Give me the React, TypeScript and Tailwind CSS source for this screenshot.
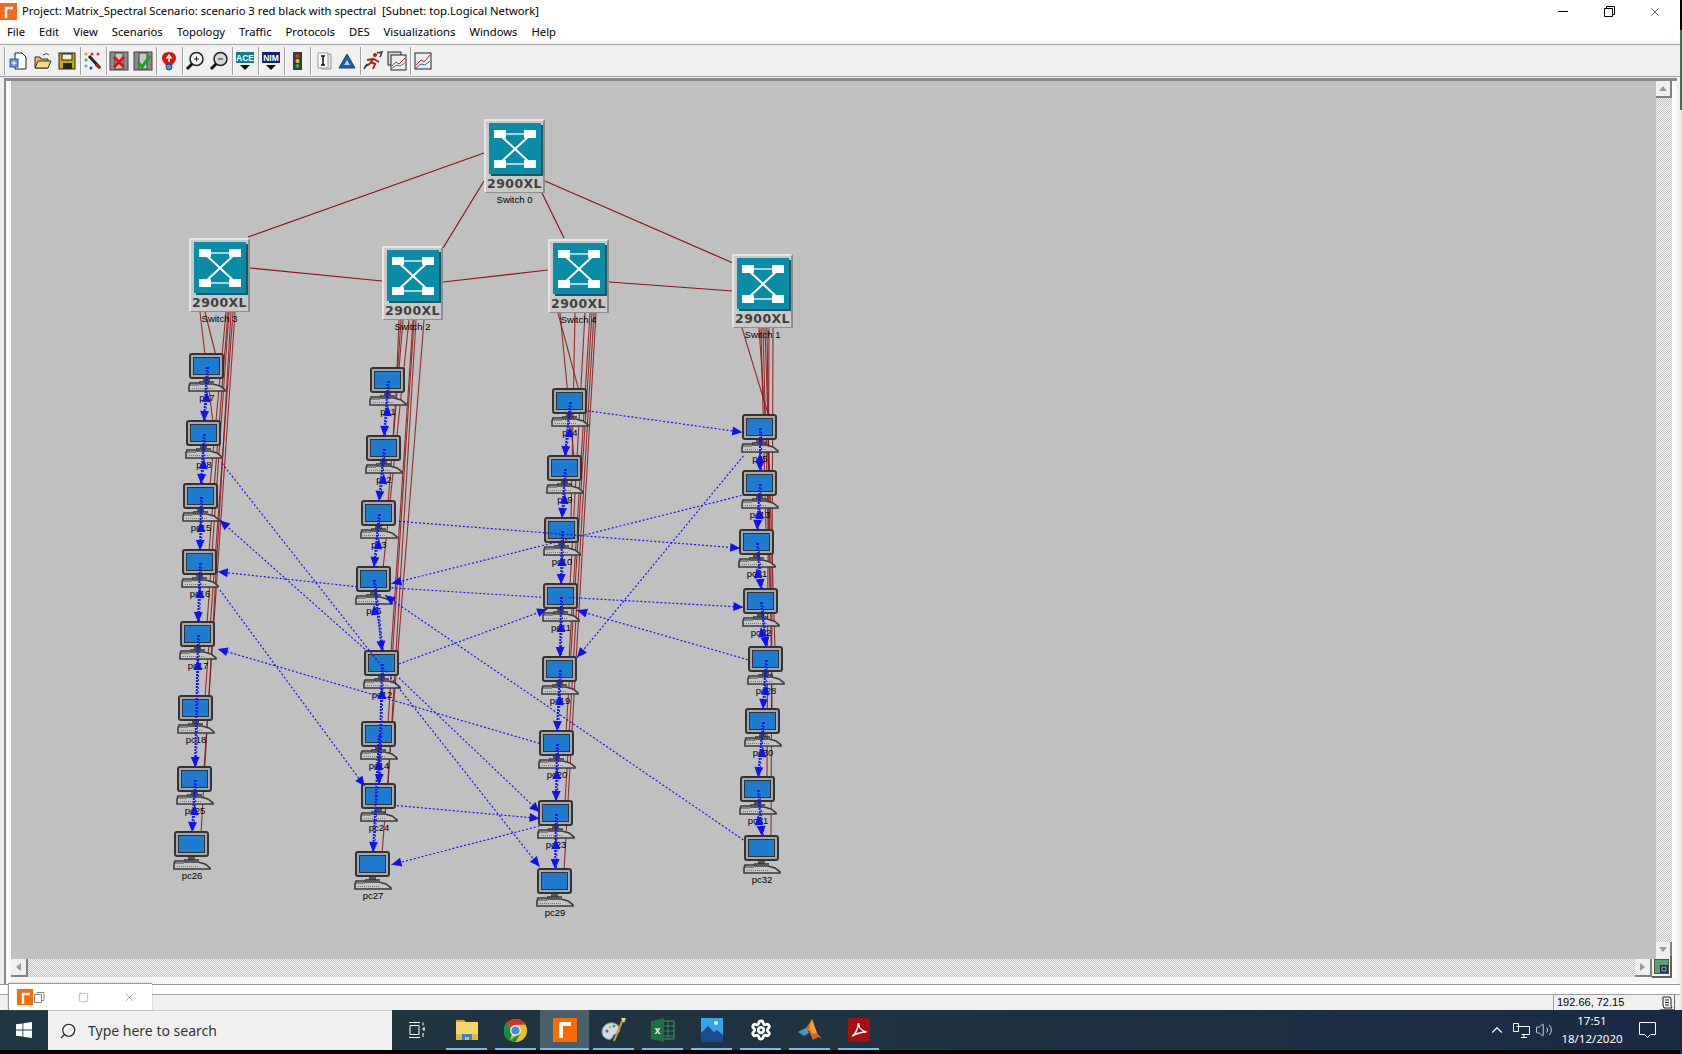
import type { ReactNode } from "react"
import { Settings, Search, ChevronUp, Volume2, X, Square } from "lucide-react"

// canvas origin in page coordinates
const OX = 11
const OY = 81
// cross links were traced off the shrunk screenshot
const K = 1682 / 1568

type Pc = { id: string; x: number; y: number; from: number }

const columns: { sw: number; pcs: Pc[] }[] = [
  {
    sw: 312,
    pcs: [
      { id: "pc7", x: 207, y: 367, from: 205 },
      { id: "pc8", x: 204, y: 434, from: 200 },
      { id: "pc15", x: 201, y: 497, from: 226 },
      { id: "pc16", x: 200, y: 563, from: 228 },
      { id: "pc17", x: 198, y: 635, from: 229 },
      { id: "pc18", x: 196, y: 709, from: 233 },
      { id: "pc25", x: 195, y: 780, from: 235 },
      { id: "pc26", x: 192, y: 845, from: 231 },
    ],
  },
  {
    sw: 320,
    pcs: [
      { id: "pc1", x: 388, y: 381, from: 399 },
      { id: "pc2", x: 384, y: 449, from: 401 },
      { id: "pc3", x: 379, y: 514, from: 403 },
      { id: "pc6", x: 374, y: 580, from: 409 },
      { id: "pc12", x: 382, y: 664, from: 413 },
      { id: "pc14", x: 379, y: 735, from: 414 },
      { id: "pc24", x: 379, y: 797, from: 416 },
      { id: "pc27", x: 373, y: 865, from: 424 },
    ],
  },
  {
    sw: 313,
    pcs: [
      { id: "pc4", x: 570, y: 402, from: 558 },
      { id: "pc9", x: 565, y: 469, from: 560 },
      { id: "pc10", x: 562, y: 531, from: 575 },
      { id: "pc11", x: 561, y: 597, from: 585 },
      { id: "pc19", x: 560, y: 670, from: 590 },
      { id: "pc20", x: 557, y: 744, from: 592 },
      { id: "pc23", x: 556, y: 814, from: 594 },
      { id: "pc29", x: 555, y: 882, from: 596 },
    ],
  },
  {
    sw: 328,
    pcs: [
      { id: "pc5", x: 760, y: 428, from: 742 },
      { id: "pc13", x: 760, y: 484, from: 759 },
      { id: "pc21", x: 757, y: 543, from: 761 },
      { id: "pc22", x: 761, y: 602, from: 763 },
      { id: "pc28", x: 766, y: 660, from: 765 },
      { id: "pc30", x: 763, y: 722, from: 767 },
      { id: "pc31", x: 758, y: 790, from: 769 },
      { id: "pc32", x: 762, y: 849, from: 773 },
    ],
  },
]

const switches = [
  { name: "Switch 0", x: 484, y: 119 },
  { name: "Switch 3", x: 189, y: 238 },
  { name: "Switch 2", x: 382, y: 246 },
  { name: "Switch 4", x: 548, y: 239 },
  { name: "Switch 1", x: 732, y: 254 },
]

const trunks = [
  [484, 153, 248, 237],
  [484, 181, 443, 248],
  [545, 181, 733, 263],
  [542, 193, 564, 238],
  [250, 268, 382, 281],
  [443, 282, 548, 270],
  [609, 282, 733, 291],
]

// demands between columns, arrow at the second point unless a fifth value of 0 is given
const demands = [
  [548, 383, 692, 403],
  [372, 486, 690, 511],
  [695, 461, 365, 544],
  [365, 548, 508, 557, 0],
  [530, 557, 693, 566],
  [372, 619, 510, 568],
  [697, 615, 538, 569],
  [693, 425, 538, 613],
  [207, 432, 503, 808],
  [340, 605, 205, 485],
  [333, 547, 203, 533],
  [205, 550, 340, 733],
  [503, 693, 203, 605],
  [372, 632, 503, 757],
  [693, 783, 359, 555],
  [370, 751, 503, 763],
  [503, 770, 365, 806],
]

// neighbours joined by a two way demand inside one column
const chains = [
  ["pc7", "pc8"], ["pc8", "pc15"], ["pc15", "pc16"], ["pc16", "pc17"], ["pc17", "pc25"], ["pc25", "pc26"],
  ["pc1", "pc2"], ["pc2", "pc3"], ["pc3", "pc6"], ["pc6", "pc12"], ["pc12", "pc24"], ["pc14", "pc27"],
  ["pc4", "pc9"], ["pc9", "pc10"], ["pc10", "pc11"], ["pc11", "pc19"], ["pc19", "pc20"], ["pc20", "pc23"], ["pc23", "pc29"],
  ["pc5", "pc13"], ["pc13", "pc21"], ["pc21", "pc22"], ["pc22", "pc28"], ["pc28", "pc30"], ["pc30", "pc31"], ["pc31", "pc32"],
]

const allPcs = columns.flatMap((c) => c.pcs)
const pcById = (id: string) => allPcs.find((p) => p.id === id)!

function arrowHead(x1: number, y1: number, x2: number, y2: number) {
  const len = Math.hypot(x2 - x1, y2 - y1)
  const ux = (x2 - x1) / len
  const uy = (y2 - y1) / len
  const bx = x2 - ux * 10
  const by = y2 - uy * 10
  return `${x2},${y2} ${bx - uy * 4.5},${by + ux * 4.5} ${bx + uy * 4.5},${by - ux * 4.5}`
}

function PcNode({ pc }: { pc: Pc }) {
  return (
    <div
      className="absolute flex w-[60px] flex-col items-center"
      style={{ left: pc.x - OX - 30, top: pc.y - OY - 14 }}
    >
      <svg width="38" height="39" viewBox="0 0 38 39">
        <rect x="2" y="1" width="33" height="24" rx="2" fill="#a8a8a8" stroke="#333" strokeWidth="2" />
        <rect x="5.500" y="4.500" width="26" height="17" fill="#1e7ccf" stroke="#333" />
        <rect x="15" y="26" width="7" height="3" fill="#555" />
        <path d="M11 29h15" stroke="#333" strokeWidth="1.500" />
        <path d="M1 33l1-3h9l1 1h13l7 2 5 4v1H1z" fill="#c4c4c4" stroke="#3a3a3a" strokeWidth="1.600" />
        <path d="M4 35.500h22" stroke="#777" strokeDasharray="1 1" />
        <path d="M2 32h9" stroke="#444" />
      </svg>
      <span className="font-['Liberation_Sans',sans-serif] text-[9.5px] leading-[12px] text-black">{pc.id}</span>
    </div>
  )
}

function SwitchNode({ name, x, y }: { name: string; x: number; y: number }) {
  return (
    <div className="absolute flex w-[61px] flex-col items-center" style={{ left: x - OX, top: y - OY }}>
      <div className="flex h-[74px] w-[61px] flex-col items-center border-t-2 border-r-2 border-b border-l-2 border-t-[#e4e4e4] border-r-[#8e8e8e] border-b-[#8e8e8e] border-l-[#e4e4e4] bg-[#c9c9c9] pt-[2px]">
        <div className="flex h-[52px] w-[52px] items-center justify-center bg-[#0b8ca6] shadow-[2px_2px_0_#1f5560]">
          <svg width="42" height="38" viewBox="0 0 42 38">
            <path d="M6 5L36 33M36 5L6 33" stroke="#fff" strokeWidth="2" />
            <path d="M8 4H34M8 34H34" stroke="#d8eef2" strokeWidth="1.500" />
            <path d="M0 0h12v8H0zM30 0h12v8H30zM0 30h12v8H0zM30 30h12v8H30z" fill="#fff" />
          </svg>
        </div>
        <span className="mt-[2px] font-['DejaVu_Sans',sans-serif] text-[12.5px] leading-[16px] font-bold tracking-[0.4px] text-[#3f3f3f]">2900XL</span>
      </div>
      <span className="mt-[1px] font-['Liberation_Sans',sans-serif] text-[9.5px] leading-[12px] whitespace-nowrap text-black">{name}</span>
    </div>
  )
}

function Diagram() {
  return (
    <div className="relative h-[878px] min-w-0 flex-1 overflow-hidden bg-[#c0c0c0]">
      <svg className="absolute inset-0" width="1645" height="878" viewBox={`${OX} ${OY} 1645 878`}>
        {trunks.map(([a, b, c, d], i) => (
          <line key={i} x1={a} y1={b} x2={c} y2={d} stroke="#8c1414" strokeWidth="1.200" />
        ))}
        {columns.map((col) =>
          col.pcs.map((pc) => (
            <line key={pc.id} x1={pc.from} y1={col.sw} x2={pc.x + 9} y2={pc.y - 11} stroke="#8c1414" strokeWidth="1.100" strokeOpacity="0.85" />
          ))
        )}
      </svg>
      {switches.map((s) => (
        <SwitchNode key={s.name} {...s} />
      ))}
      {allPcs.map((pc) => (
        <PcNode key={pc.id} pc={pc} />
      ))}
      <svg className="absolute inset-0" width="1645" height="878" viewBox={`${OX} ${OY} 1645 878`}>
        {demands.map(([a, b, c, d, head], i) => {
          const [x1, y1, x2, y2] = [a * K, b * K, c * K, d * K]
          return (
            <g key={i}>
              <line x1={x1} y1={y1} x2={x2} y2={y2} stroke="#1414f0" strokeWidth="1.200" strokeDasharray="2 2" />
              {head !== 0 && <polygon points={arrowHead(x1, y1, x2, y2)} fill="#1010f0" />}
            </g>
          )
        })}
        {chains.map(([a, b]) => {
          const u = pcById(a)
          const v = pcById(b)
          const up = u.y + 25
          const down = v.y - 13
          return (
            <g key={a + b}>
              <line x1={u.x} y1={u.y} x2={v.x} y2={down} stroke="#1414f0" strokeWidth="2" strokeDasharray="2 1" />
              <line x1={u.x + 1.5} y1={u.y} x2={v.x + 1.5} y2={down} stroke="#1414f0" strokeWidth="1" strokeDasharray="2 2" />
              <polygon points={arrowHead(v.x, v.y, u.x, up)} fill="#1010f0" />
              <polygon points={arrowHead(u.x, u.y, v.x, down)} fill="#1010f0" />
            </g>
          )
        })}
      </svg>
    </div>
  )
}

function Sep({ className = "" }: { className?: string }) {
  return <div className={`h-[28px] w-[2px] border-l border-[#a0a0a0] bg-white ${className}`} />
}

function Tool({ children }: { children: ReactNode }) {
  return (
    <div className="flex h-6 w-6 items-center justify-center">
      <svg width="20" height="20" viewBox="0 0 20 20">
        {children}
      </svg>
    </div>
  )
}

// every separator after the first: one pixel gap left, icon overlaps its right pixel
const sepNext = "ml-px -mr-px"

function Toolbar() {
  return (
    <div className="flex h-[31px] items-center border-b border-[#a0a0a0] bg-[#f0f0f0] pl-[4px]">
      <Sep className="mr-px" />
      <Tool>
        <path d="M6 2h7l4 4v12H6z" fill="#fff" stroke="#222" />
        <rect x="1" y="8" width="8" height="8" fill="#6b8fd6" stroke="#3a5aa0" />
        <path d="M5 9.500v5M2.500 12h5" stroke="#fff" />
      </Tool>
      <Tool>
        <path d="M2 6h5l1 2h7v9H2z" fill="#e8c04a" stroke="#333" />
        <path d="M2 17l3-7h13l-3 7z" fill="#f5dc80" stroke="#333" />
        <path d="M10 4q4-3 6 0" fill="none" stroke="#444" />
      </Tool>
      <Tool>
        <rect x="2" y="2" width="16" height="16" fill="#c8a818" stroke="#222" />
        <rect x="5" y="3" width="10" height="6" fill="#f4f0d0" stroke="#222" />
        <rect x="6" y="12" width="9" height="6" fill="#222" />
      </Tool>
      <Sep className={sepNext} />
      <Tool>
        <path d="M6 5l11 12" stroke="#222" strokeWidth="3" />
        <path d="M14 12l4 5-1 1-5-3z" fill="#c01818" />
        <circle cx="3" cy="3" r="1.500" fill="#e0a020" /><circle cx="9" cy="3" r="1.500" fill="#e02020" /><circle cx="15" cy="3" r="1.500" fill="#d04040" />
        <circle cx="3" cy="9" r="1.500" fill="#30c030" /><circle cx="3" cy="15" r="1.500" fill="#30c0c0" /><circle cx="8" cy="17" r="1.500" fill="#2040e0" />
      </Tool>
      <Sep className={sepNext} />
      <Tool>
        <rect x="1" y="1" width="18" height="18" fill="#8a8a8a" stroke="#444" />
        <rect x="6" y="2" width="8" height="16" fill="#c8c8c8" stroke="#444" />
        <path d="M5 6l10 10M15 6L5 16" stroke="#e01010" strokeWidth="3" />
      </Tool>
      <Tool>
        <rect x="1" y="1" width="18" height="18" fill="#8a8a8a" stroke="#444" />
        <rect x="6" y="2" width="8" height="16" fill="#c8c8c8" stroke="#444" />
        <path d="M5 11l4 5 8-11" fill="none" stroke="#20a020" strokeWidth="3" />
      </Tool>
      <Sep className={sepNext} />
      <Tool>
        <path d="M10 1c5 0 7 3 7 6 0 4-4 6-5 9H8C7 13 3 11 3 7c0-3 2-6 7-6z" fill="#e01010" />
        <path d="M10 11V5M7.500 7.500L10 4l2.500 3.500" fill="none" stroke="#fff" strokeWidth="1.500" />
        <circle cx="10" cy="16" r="3" fill="#30a0d0" stroke="#105070" />
      </Tool>
      <Sep className={sepNext} />
      <Tool>
        <circle cx="11.500" cy="8" r="6.500" fill="#f4f4f4" stroke="#222" strokeWidth="1.500" />
        <path d="M9 8h5M11.500 5.500v5" stroke="#222" />
        <path d="M7 13l-5 5" stroke="#111" strokeWidth="3" />
      </Tool>
      <Tool>
        <circle cx="11.500" cy="8" r="6.500" fill="#d8d8d8" stroke="#222" strokeWidth="1.500" />
        <path d="M9 8h5" stroke="#222" />
        <path d="M7 13l-5 5" stroke="#111" strokeWidth="3" />
      </Tool>
      <Sep className={sepNext} />
      <Tool>
        <rect x="1" y="1" width="18" height="11" fill="#0d7f8f" />
        <text x="10" y="10" textAnchor="middle" fontFamily="Liberation Sans" fontSize="8.500" fontWeight="700" fill="#fff">ACE</text>
        <path d="M5 14h10l-5 5z" fill="#111" />
      </Tool>
      <Sep className={sepNext} />
      <Tool>
        <rect x="1" y="1" width="18" height="11" fill="#14246e" />
        <text x="10" y="10" textAnchor="middle" fontFamily="Liberation Sans" fontSize="8.500" fontWeight="700" fill="#fff">NIM</text>
        <path d="M5 14h10l-5 5z" fill="#111" />
      </Tool>
      <Sep className={sepNext} />
      <Tool>
        <rect x="6" y="1" width="9" height="18" fill="#3a3a3a" />
        <circle cx="10.500" cy="5" r="2" fill="#e03020" /><circle cx="10.500" cy="10" r="2" fill="#e8c020" /><circle cx="10.500" cy="15" r="2" fill="#30b030" />
      </Tool>
      <Sep className={sepNext} />
      <Tool>
        <path d="M8 3h10v15H8z" fill="#e8e8e8" stroke="#999" />
        <path d="M5 2h10v15H5z" fill="#fff" stroke="#999" />
        <path d="M8 5h4M10 5v9M8 14h4" stroke="#111" strokeWidth="1.500" />
      </Tool>
      <Tool>
        <path d="M10 3l8 14H2z" fill="#1c5fa8" stroke="#123e70" />
        <path d="M10 9l3 5H7z" fill="#b8d0e8" />
      </Tool>
      <Sep className={sepNext} />
      <Tool>
        <circle cx="12" cy="4" r="2" fill="#b01818" />
        <path d="M11 7l-3 4 4 2-2 5M10 8l-6 1M11 8l5 3M8 12l-5 3" fill="none" stroke="#a82020" strokeWidth="2" />
        <path d="M14 2l5-1-2 5M1 18l3-5" fill="none" stroke="#333" strokeWidth="1.500" />
      </Tool>
      <Tool>
        <rect x="1" y="1" width="13" height="13" fill="#ddd" stroke="#222" />
        <rect x="4" y="4" width="15" height="15" fill="#eee" stroke="#222" />
        <path d="M5 15l4-4 3 2 6-6" fill="none" stroke="#d02020" />
        <path d="M5 17l5-3 3 1 5-3" fill="none" stroke="#20a040" />
      </Tool>
      <Sep className={sepNext} />
      <Tool>
        <rect x="2" y="2" width="16" height="16" fill="#f0f0f0" stroke="#222" />
        <path d="M3 14l5-5 3 2 6-7" fill="none" stroke="#d02020" />
        <path d="M3 17l5-4 4 1 5-4" fill="none" stroke="#2060d0" />
      </Tool>
    </div>
  )
}

function TaskCell({ children, active = false }: { children: ReactNode; active?: boolean }) {
  return (
    <div className={`relative flex h-10 w-[49px] items-center justify-center ${active ? "bg-[#4b5f69]" : ""}`}>
      {children}
      <div className={`absolute bottom-0 h-[2px] bg-[#76b9ed] ${active ? "inset-x-0" : "inset-x-[4px]"}`} />
    </div>
  )
}

function Taskbar() {
  return (
    <div className="flex h-10 items-stretch bg-gradient-to-r from-[#203741] via-[#1f3340] to-[#1a2a45]">
      <div className="flex w-12 items-center justify-center">
        <svg width="16" height="16" viewBox="0 0 16 16" fill="#fff">
          <path d="M0 2.300L6.500 1.400V7.600H0zM7.300 1.300L16 0V7.600H7.300zM0 8.400H6.500V14.600L0 13.700zM7.300 8.400H16V16L7.300 14.700z" />
        </svg>
      </div>
      <div className="flex w-[344px] items-center gap-[11px] border-t border-[#c8c8c8] bg-[#f0f0f0] pl-[11px]">
        <Search size={18} strokeWidth={1.5} className="-scale-x-100 text-[#222]" />
        <span className="font-['Noto_Sans',sans-serif] text-[14px] text-[#333]">Type here to search</span>
      </div>
      <div className="flex w-[50px] items-center justify-center">
        <svg width="16" height="16" viewBox="0 0 16 16" fill="none" stroke="#fff">
          <path d="M0 .500h11M0 15.500h11M1 3.500h9v9H1zM14 .500v3M14 6h2v2h-2zM14 11v4" />
        </svg>
      </div>
      <TaskCell>
        <svg width="24" height="20" viewBox="0 0 24 20">
          <path d="M1 0h8l2 2h-10z" fill="#d9a520" />
          <rect x="1" y="2" width="22" height="18" fill="#f8d567" />
          <path d="M1 14h22v6H1z" fill="#e8b838" />
          <path d="M7 20v-6h10v6h-3v-3h-4v3z" fill="#2b88d8" />
        </svg>
      </TaskCell>
      <TaskCell>
        <svg width="23" height="23" viewBox="0 0 24 24">
          <circle cx="12" cy="12" r="12" fill="#e8c020" />
          <path d="M12 0a12 12 0 0 1 10.400 6H12a6 6 0 0 0-5.200 3L3.500 3.500A12 12 0 0 1 12 0z" fill="#d93025" />
          <path d="M3.500 3.500L9 14l-3 9A12 12 0 0 1 3.500 3.500z" fill="#1e8e3e" />
          <path d="M6 22.500L12 18l5-3 -5 9a12 12 0 0 1-6-1.500z" fill="#1e8e3e" />
          <circle cx="12" cy="12" r="5.500" fill="#fff" />
          <circle cx="12" cy="12" r="4.300" fill="#4285f4" />
        </svg>
      </TaskCell>
      <TaskCell active>
        <svg width="24" height="24" viewBox="0 0 24 24">
          <rect width="24" height="24" fill="#ff6a00" />
          <path d="M8 20V6h10" fill="none" stroke="#fff" strokeWidth="4" />
        </svg>
      </TaskCell>
      <TaskCell>
        <svg width="26" height="26" viewBox="0 0 26 26">
          <path d="M1 15c0-6 6-10 11-9 5 1 8 5 6 9-2 3-5 1-6 4-1 3-3 4-6 3-3-1-5-4-5-7z" fill="#c8dcec" stroke="#7fa0bc" />
          <circle cx="6" cy="14" r="1.500" fill="#d04040" /><circle cx="9" cy="10" r="1.500" fill="#e0b030" /><circle cx="13" cy="9" r="1.500" fill="#40a050" />
          <path d="M22 2L13 24" stroke="#d89030" strokeWidth="2" />
          <path d="M20 1h5l-2 5z" fill="#e8d8a0" />
        </svg>
      </TaskCell>
      <TaskCell>
        <svg width="24" height="24" viewBox="0 0 24 24">
          <path d="M9 3h14v18H9z" fill="none" stroke="#3e9a68" />
          <path d="M12 3v18M17 3v18M9 8h14M9 13h14M9 18h14" stroke="#3e9a68" strokeWidth=".8" />
          <path d="M0 3l13-3v24L0 21z" fill="#1e6e42" />
          <text x="6.500" y="15.500" textAnchor="middle" fontFamily="Liberation Sans" fontSize="10" fontWeight="700" fill="#fff">x</text>
        </svg>
      </TaskCell>
      <TaskCell>
        <svg width="22" height="24" viewBox="0 0 22 24">
          <rect width="22" height="24" fill="#35a4e8" />
          <path d="M0 24V15l7-7 6 6 3-2 6 5v7z" fill="#1a4a90" />
          <circle cx="15" cy="5" r="2" fill="#dff" />
        </svg>
      </TaskCell>
      <TaskCell>
        <Settings size={22} strokeWidth={3} className="text-white" />
      </TaskCell>
      <TaskCell>
        <svg width="24" height="23" viewBox="0 0 24 23">
          <path d="M0 13l8-4 6-9 5 14 5 6-4-2-5 3-4-9z" fill="#e0651a" />
          <path d="M0 13l8-4 3 5-5 3z" fill="#3d9ad1" />
          <path d="M14 0l5 14-4 1-4-5z" fill="#f0a030" />
        </svg>
      </TaskCell>
      <TaskCell>
        <svg width="22" height="24" viewBox="0 0 22 24">
          <rect width="22" height="24" rx="3" fill="#a80f0f" />
          <path d="M4 18c3-1 6-7 6.500-13 .5 6 3 8 8 9-5 0-9 1-14.500 4z" fill="none" stroke="#fff" strokeWidth="1.500" />
        </svg>
      </TaskCell>
      <div className="ml-auto flex items-center pr-[24px] text-white">
        <ChevronUp size={18} strokeWidth={1.5} />
        <svg className="ml-[7px]" width="17" height="15" viewBox="0 0 17 15" fill="none" stroke="#fff">
          <path d="M3.500 3.500h13v8h-8M8 14.500h6M11 11.500v3M.5.500h5v8h-5z" />
        </svg>
        <Volume2 size={18} strokeWidth={1.2} className="ml-[5px] text-[#dde]" />
        <div className="flex w-[78px] flex-col items-center font-['Noto_Sans',sans-serif] text-[11.5px] leading-[18px]">
          <span>17:51</span>
          <span>18/12/2020</span>
        </div>
        <svg className="ml-[8px]" width="17" height="17" viewBox="0 0 17 17" fill="none" stroke="#fff">
          <path d="M.5.500h16v12h-5l-3 3-3-3h-5z" />
        </svg>
      </div>
    </div>
  )
}

export default function App() {
  return (
    <div className="relative flex h-[1054px] w-[1682px] overflow-hidden bg-black font-['Noto_Sans',sans-serif] text-black">
      <div className="flex w-[1680px] flex-col">
        {/* title */}
        <div className="flex h-[23px] items-center bg-white">
          <svg width="17" height="17" viewBox="0 0 17 17" className="mr-[5px]">
            <rect width="17" height="17" fill="#f26a1b" />
            <path d="M6 15V5h7" fill="none" stroke="#fff" strokeWidth="2.500" />
          </svg>
          <span className="text-[11.25px] whitespace-pre">Project: Matrix_Spectral Scenario: scenario 3 red black with spectral  [Subnet: top.Logical Network]</span>
          <div className="ml-auto flex pr-[2px]">
            <div className="flex h-[22px] w-[46px] items-center justify-center"><div className="h-px w-[10px] bg-black" /></div>
            <div className="flex h-[22px] w-[46px] items-center justify-center">
              <svg width="11" height="11" viewBox="0 0 11 11" fill="none" stroke="#000"><path d="M.5 2.500h8v8h-8zM2.500 2.500v-2h8v8h-2" /></svg>
            </div>
            <div className="flex h-[22px] w-[46px] items-center justify-center"><X size={14} strokeWidth={1} /></div>
          </div>
        </div>
        {/* menu */}
        <div className="flex h-[19px] items-center gap-[14px] bg-white pl-[7px] text-[11.25px]">
          {["File", "Edit", "View", "Scenarios", "Topology", "Traffic", "Protocols", "DES", "Visualizations", "Windows", "Help"].map((m) => (
            <span key={m}>{m}</span>
          ))}
        </div>
        <div className="h-[2px] bg-[#f4f4f4]" />
        <div className="h-[2px] border-t border-[#a8a8a8] bg-[#f0f0f0]" />
        <Toolbar />
        {/* workspace */}
        <div className="flex h-[907px] bg-[#f0f0f0] pt-[1px] pl-[4px] pr-[3px]">
          <div className="flex min-w-0 flex-1 flex-col border-t-[3px] border-l-2 border-[#8a8a8a] bg-[#fafafa] pl-[5px]">
            <div className="flex">
              <Diagram />
              <div className="flex w-[16px] flex-col bg-[repeating-conic-gradient(#c4c4c4_0_25%,#f4f4f4_0_50%)] bg-[length:2px_2px]">
                <div className="flex h-[17px] items-center justify-center border-r-2 border-b-2 border-[#808080] bg-[#f0f0f0] text-[#999]">
                  <svg width="8" height="5" viewBox="0 0 8 5" fill="currentColor"><path d="M4 0l4 5H0z" /></svg>
                </div>
                <div className="flex-1" />
                <div className="flex h-[17px] items-center justify-center border-r-2 border-b-2 border-[#808080] bg-[#f0f0f0] text-[#999]">
                  <svg width="8" height="5" viewBox="0 0 8 5" fill="currentColor"><path d="M4 5l4-5H0z" /></svg>
                </div>
              </div>
              <div className="w-[5px]" />
            </div>
            <div className="flex h-[19px] pr-[5px]">
              <div className="flex h-[18px] min-w-0 flex-1 bg-[repeating-conic-gradient(#c4c4c4_0_25%,#f4f4f4_0_50%)] bg-[length:2px_2px]">
                <div className="flex w-[17px] items-center justify-center border-r-2 border-b-2 border-[#808080] bg-[#f0f0f0] text-[#999]">
                  <svg width="5" height="8" viewBox="0 0 5 8" fill="currentColor"><path d="M0 4l5-4v8z" /></svg>
                </div>
                <div className="flex-1" />
                <div className="flex w-[17px] items-center justify-center border-r-2 border-b-2 border-[#808080] bg-[#f0f0f0] text-[#999]">
                  <svg width="5" height="8" viewBox="0 0 5 8" fill="currentColor"><path d="M5 4L0 0v8z" /></svg>
                </div>
              </div>
              <div className="-mt-[3px] flex h-[22px] w-[20px] items-center justify-center border-r-2 border-b-2 border-[#606060] bg-[#f0f0f0]">
                <svg width="15" height="15" viewBox="0 0 15 15">
                  <rect width="15" height="15" fill="#5c9e70" stroke="#222" />
                  <rect x="6" y="6" width="8" height="8" fill="#1e2a50" />
                  <path d="M8 8h4v4H8z" fill="none" stroke="#9cb0d0" />
                </svg>
              </div>
            </div>
            <div className="h-[5px] bg-[#f4f4f4]" />
          </div>
        </div>
        {/* status */}
        <div className="flex h-[26px] flex-col bg-[#f0f0f0]">
          <div className="h-[1px] bg-[#9a9a9a]" />
          <div className="h-[9px] bg-white" />
          <div className="flex h-[16px] items-start justify-end border-t border-[#a0a0a0] pr-[5px]">
            <div className="flex h-[15px] w-[103px] items-center border-l border-[#a0a0a0] pl-[3px] font-['Liberation_Sans',sans-serif] text-[11px]">192.66, 72.15</div>
            <div className="ml-[4px] flex h-[15px] w-[15px] items-center justify-center border-r border-b border-[#666] bg-[#f0f0f0]">
              <svg width="12" height="13" viewBox="0 0 12 13" fill="none" stroke="#222"><path d="M2 1h7l1 2v7l1 2H3L2 9zM4 4h4M4 6.500h4M4 9h4" /></svg>
            </div>
          </div>
        </div>
        <Taskbar />
      </div>
      <div className="flex w-[2px] flex-col">
        <div className="h-[30px] bg-black" />
        <div className="h-[80px] bg-[#2c7a58]" />
        <div className="flex-1 bg-[#e8e8e8]" />
        <div className="h-[44px] bg-[#1a2a45]" />
      </div>
      {/* hover preview over the status bar */}
      <div className="absolute top-[983px] left-[8px] flex h-[27px] w-[144px] items-center border-t border-l border-[#9a9a9a] bg-white shadow-[0_0_1px_#888]">
        <svg width="16" height="16" viewBox="0 0 16 16" className="ml-[8px]">
          <rect width="16" height="16" fill="#ff6a00" />
          <path d="M6 15V5h7" fill="none" stroke="#fff" strokeWidth="2.500" />
        </svg>
        <svg width="11" height="11" viewBox="0 0 11 11" fill="none" stroke="#888" className="ml-[1px]">
          <path d="M.5 2.500h7v8h-7zM3 2.500v-2h7v8H7.500" />
        </svg>
        <Square size={11} strokeWidth={1.2} className="ml-[33px] text-[#888]" />
        <X size={13} strokeWidth={1} className="ml-[34px] text-[#666]" />
      </div>
    </div>
  )
}
